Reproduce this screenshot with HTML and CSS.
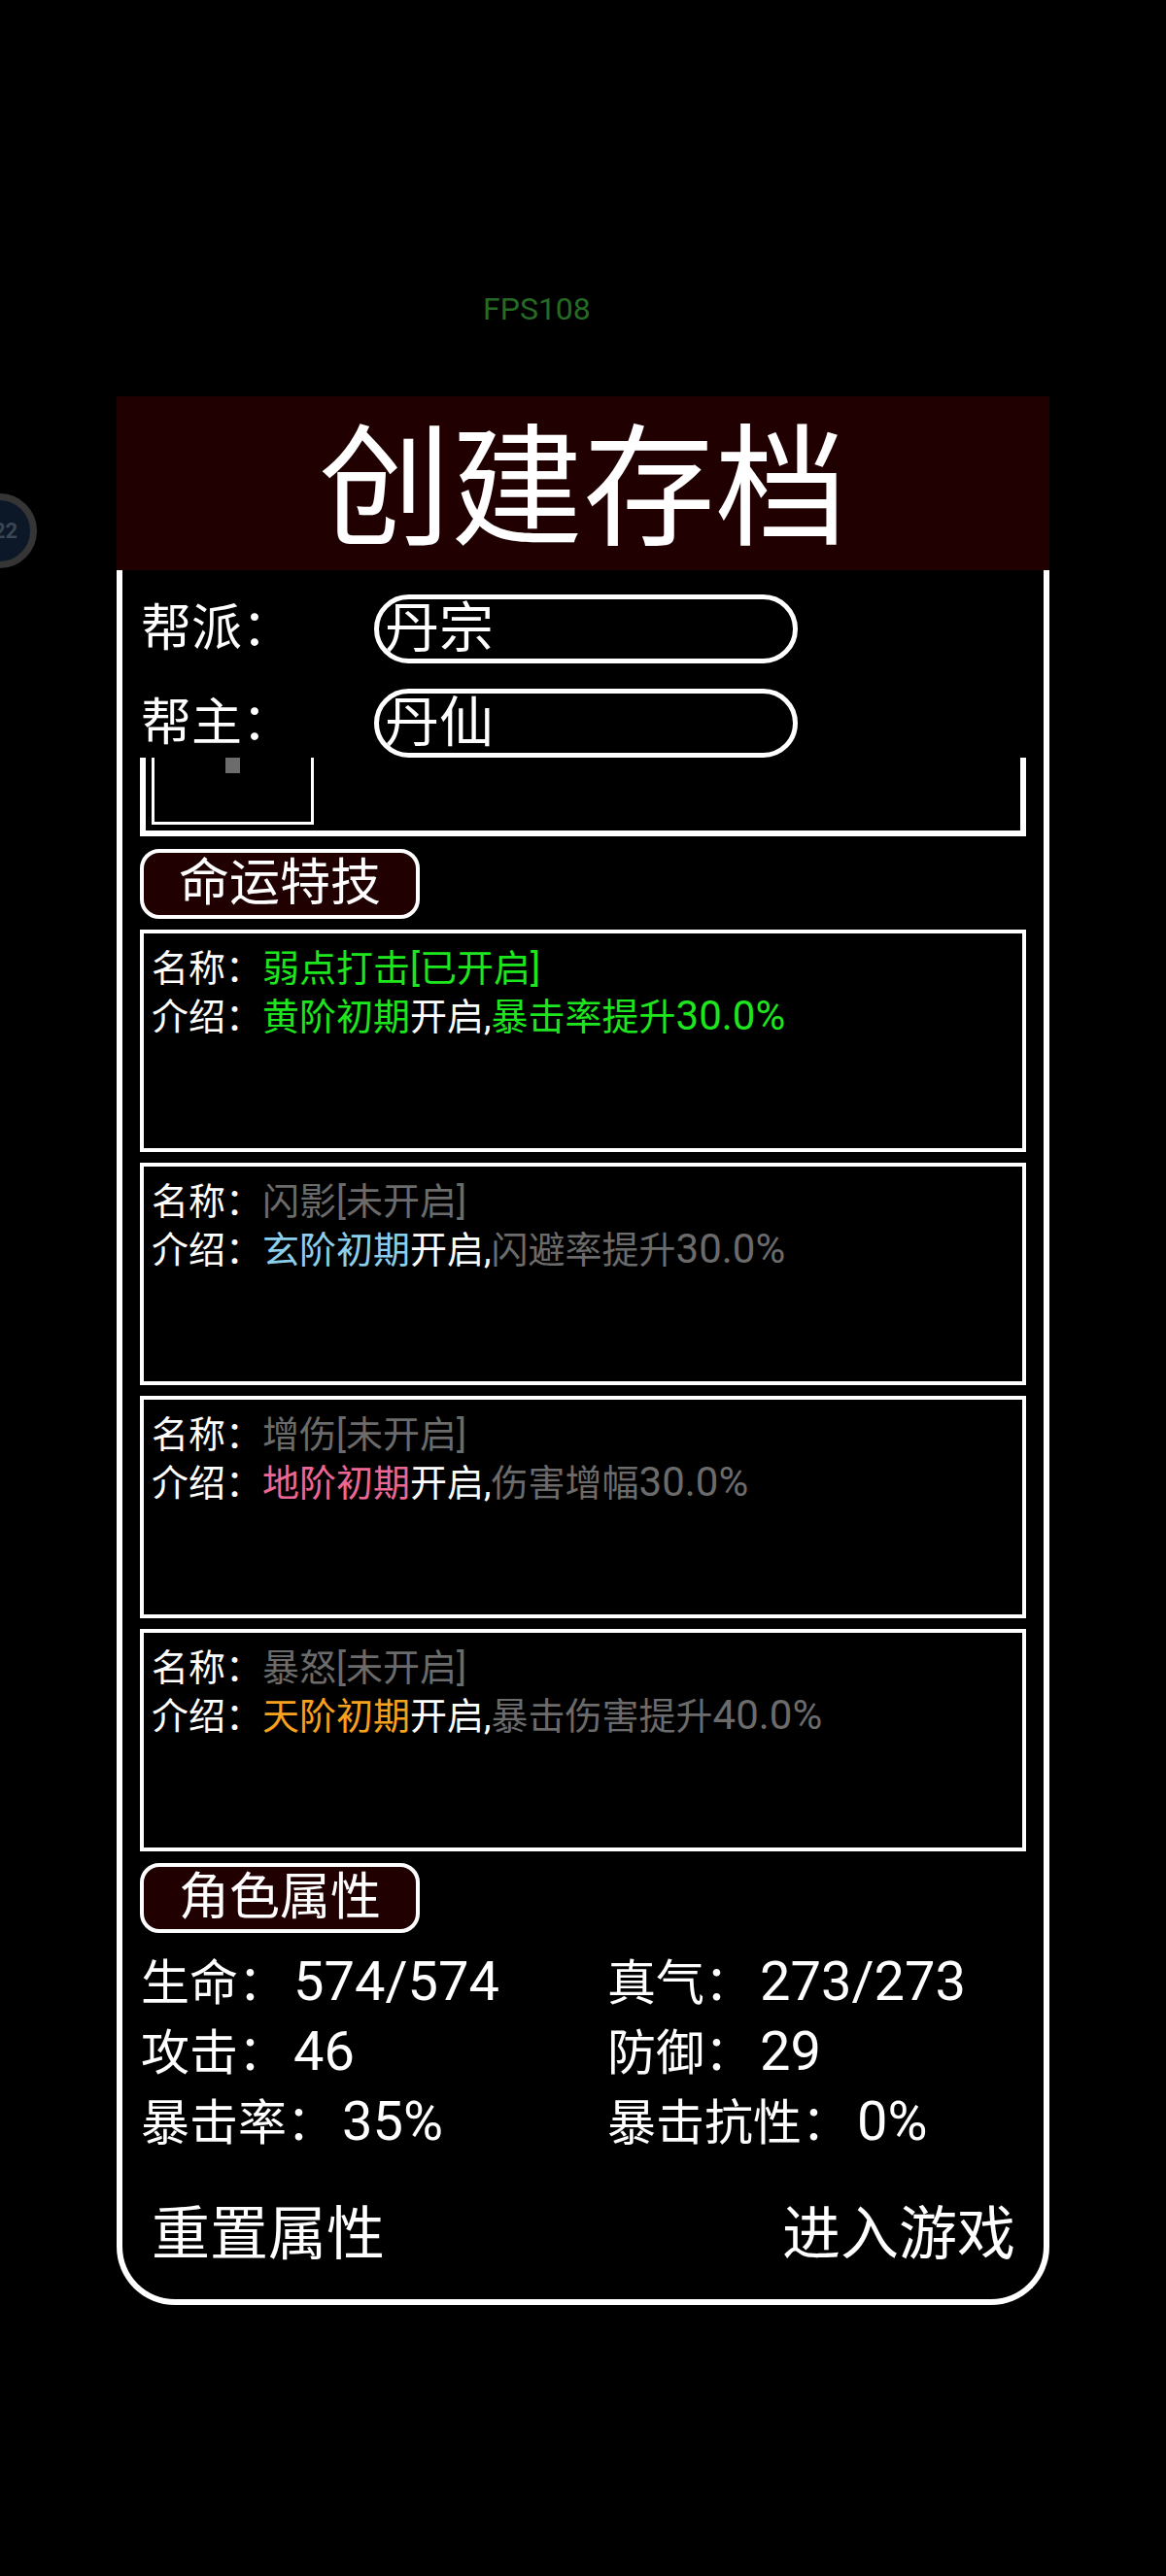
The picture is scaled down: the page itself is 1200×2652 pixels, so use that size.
FILE: index.html
```html
<!DOCTYPE html>
<html lang="zh-CN">
<head>
<meta charset="utf-8">
<title>创建存档</title>
<link rel="stylesheet" href="styles.css">
</head>
<body>
<div class="stage">
  <div class="fps">FPS108</div>
  <div class="float-ball"><span>22</span></div>
  <div class="dialog">
    <div class="title">创建存档</div>
    <div class="panel">
      <div class="fields">
        <div class="row">
          <div class="label">帮派：</div>
          <div class="input">丹宗</div>
        </div>
        <div class="row">
          <div class="label">帮主：</div>
          <div class="input">丹仙</div>
        </div>
      </div>
      <div class="clip-box">
        <div class="frame"><div class="dot"></div></div>
      </div>
      <div class="tag">命运特技</div>
      <div class="cards">
        <div class="card">
          <div class="line">名称：<span class="green">弱点打击[已开启]</span></div>
          <div class="line">介绍：<span class="green">黄阶初期</span>开启,<span class="green">暴击率提升<span class="num">30.0%</span></span></div>
        </div>
        <div class="card">
          <div class="line">名称：<span class="gray">闪影[未开启]</span></div>
          <div class="line">介绍：<span class="blue">玄阶初期</span>开启,<span class="gray">闪避率提升<span class="num">30.0%</span></span></div>
        </div>
        <div class="card">
          <div class="line">名称：<span class="gray">增伤[未开启]</span></div>
          <div class="line">介绍：<span class="pink">地阶初期</span>开启,<span class="gray">伤害增幅<span class="num">30.0%</span></span></div>
        </div>
        <div class="card">
          <div class="line">名称：<span class="gray">暴怒[未开启]</span></div>
          <div class="line">介绍：<span class="orange">天阶初期</span>开启,<span class="gray">暴击伤害提升<span class="num">40.0%</span></span></div>
        </div>
      </div>
      <div class="tag">角色属性</div>
      <div class="stats">
        <div>生命：<span class="val">574/574</span></div>
        <div>真气：<span class="val">273/273</span></div>
        <div>攻击：<span class="val">46</span></div>
        <div>防御：<span class="val">29</span></div>
        <div>暴击率：<span class="val">35%</span></div>
        <div>暴击抗性：<span class="val">0%</span></div>
      </div>
      <div class="actions">
        <div class="action">重置属性</div>
        <div class="action">进入游戏</div>
      </div>
    </div>
  </div>
</div>
</body>
</html>
```
FILE: styles.css
```css
html, body {
  margin: 0;
  padding: 0;
  background: #000;
}
body {
  width: 1200px;
  height: 2652px;
  overflow: hidden;
  font-family: Roboto, "Noto Sans CJK SC", sans-serif;
  color: #fff;
}
.stage {
  position: relative;
  padding-top: 298px;
}
.fps {
  margin-left: 497px;
  font-size: 32px;
  line-height: 40px;
  color: #256b25;
}
.float-ball {
  position: absolute;
  left: -39px;
  top: 508px;
  width: 77px;
  height: 77px;
  box-sizing: border-box;
  border: 7px solid #353535;
  border-radius: 50%;
  background: #0c1727;
  display: flex;
  align-items: center;
  justify-content: center;
}
.float-ball span {
  margin-left: 12px;
  font-size: 22px;
  font-weight: bold;
  color: #3b4654;
}
.dialog {
  width: 960px;
  margin-left: 120px;
  margin-top: 70px;
}
.title {
  height: 179px;
  box-sizing: border-box;
  padding-top: 14px;
  background: #200000;
  font-size: 136px;
  line-height: 165px;
  text-align: center;
}
.panel {
  height: 1786px;
  box-sizing: border-box;
  border: 6px solid #fff;
  border-top: 0;
  border-radius: 0 0 60px 60px;
  display: flex;
  flex-direction: column;
}
.fields {
  padding-top: 25px;
  display: flex;
  flex-direction: column;
  gap: 26px;
}
.row {
  display: flex;
  align-items: center;
  height: 71px;
}
.label {
  width: 259px;
  padding-left: 19px;
  box-sizing: border-box;
  font-size: 52px;
  line-height: 71px;
}
.input {
  width: 436px;
  height: 71px;
  box-sizing: border-box;
  border: 5px solid #fff;
  border-radius: 36px;
  padding-left: 6px;
  font-size: 56px;
  line-height: 61px;
}
.clip-box {
  margin-left: 18px;
  width: 912px;
  height: 81px;
  box-sizing: border-box;
  border: 6px solid #fff;
  border-top: 0;
  padding-left: 6px;
}
.frame {
  width: 167px;
  height: 69px;
  box-sizing: border-box;
  border: 3px solid #fff;
  border-top: 0;
  display: flex;
  justify-content: center;
}
.dot {
  width: 15px;
  height: 16px;
  background: #6c6c6c;
}
.tag {
  margin-left: 18px;
  margin-top: 13px;
  width: 288px;
  height: 72px;
  box-sizing: border-box;
  border: 4px solid #fff;
  border-radius: 20px;
  background: #200000;
  font-size: 52px;
  line-height: 64px;
  text-align: center;
}
.cards {
  margin-left: 18px;
  margin-top: 11px;
  width: 912px;
  display: flex;
  flex-direction: column;
  gap: 11px;
}
.card {
  height: 229px;
  box-sizing: border-box;
  border: 4px solid #fff;
  padding: 11px 0 0 8px;
}
.line {
  font-size: 38px;
  line-height: 50px;
  white-space: nowrap;
}
.num {
  font-size: 42px;
  line-height: 1;
}
.green { color: #1ee61e; }
.gray { color: #6b6b6b; }
.blue { color: #8ccfec; }
.pink { color: #ec6894; }
.orange { color: #f7a11e; }
.cards + .tag {
  margin-top: 12px;
}
.stats {
  margin-top: 16px;
  padding-left: 19px;
  display: grid;
  grid-template-columns: 480px 1fr;
  font-size: 50px;
  line-height: 72px;
}
.val {
  margin-left: 7px;
  font-size: 56px;
  line-height: 1;
}
.actions {
  margin-top: 43px;
  padding: 0 29px 0 30px;
  display: flex;
  justify-content: space-between;
  font-size: 60px;
  line-height: 72px;
}
```
